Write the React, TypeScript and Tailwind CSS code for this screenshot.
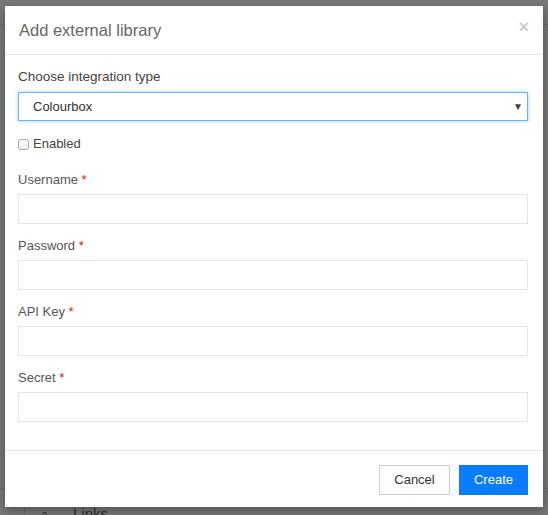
import React from "react";

const fields = ["Username", "Password", "API Key", "Secret"];

function Field({ label }: { label: string }) {
  return (
    <div className="mt-[13px]">
      <div className="h-4 pt-[1px] leading-4 text-[13px] text-[#555]">
        {label} <span className="text-[#e0161b]">*</span>
      </div>
      <div className="mt-[7px] h-[30px] border border-[#e4e4e4] bg-white" />
    </div>
  );
}

export default function App() {
  return (
    <div
      className="relative h-[515px] w-[548px] overflow-hidden bg-[#787878]"
      style={{ fontFamily: '"Liberation Sans", Arial, sans-serif' }}
    >
      {/* page behind the overlay */}
      <div className="flex h-full flex-col">
        <div className="h-[25px] border-b border-[#6c6c6c]" />
        <div className="flex-1" />
        <div className="flex h-[27px] items-start border-t border-[#6f6f6f]">
          <div className="ml-[24px] h-full border-l border-[#6c6c6c]" />
          <span className="ml-[16px] mt-[18px] text-[13px] leading-none text-[#2e2e2e]">⌕</span>
          <span className="ml-[25px] mt-[17px] text-[15px] leading-none text-[#2a2a2a]">Links</span>
        </div>
      </div>

      {/* modal */}
      <div className="absolute left-[5px] top-[6px] w-[538px] bg-white shadow-[0_3px_9px_rgba(0,0,0,0.35)]">
        <div className="flex h-[49px] items-center justify-between border-b border-[#e5e5e5] pl-[14px] pr-[14px]">
          <div className="text-[16.5px] text-[#666]">Add external library</div>
          <div className="-mt-[6px] text-[18px] font-bold leading-none text-[#cfcfcf]">×</div>
        </div>

        <div className="pb-[28px] pl-[13px] pr-[15px] pt-[13px]">
          <div className="h-4 pt-[1px] leading-4 text-[13.5px] text-[#444]">Choose integration type</div>
          <div className="mt-[8px] flex h-[29px] items-center justify-between border border-[#6fb1ee] bg-white pl-[14px] pr-[4px] shadow-[0_0_4px_rgba(102,175,233,0.6)]">
            <span className="text-[13px] text-[#333]">Colourbox</span>
            <span className="text-[10px] text-[#444]">▼</span>
          </div>

          <div className="mt-[15px] flex h-4 items-center">
            <div className="h-[11px] w-[11px] rounded-[3px] border border-[#a9a9a9] bg-gradient-to-b from-white to-[#ececec]" />
            <span className="ml-[4px] text-[13px] text-[#444]">Enabled</span>
          </div>

          <div className="pt-[6px]">
            {fields.map((f) => (
              <Field key={f} label={f} />
            ))}
          </div>
        </div>

        <div className="flex h-[57px] items-start justify-end gap-[9px] border-t border-[#e5e5e5] pr-[15px] pt-[14px]">
          <button className="h-[30px] w-[71px] border border-[#cccccc] bg-white text-[13px] text-[#333]">
            Cancel
          </button>
          <button className="h-[30px] w-[69px] bg-[#0a7cff] text-[13px] text-white">
            Create
          </button>
        </div>
      </div>
    </div>
  );
}
